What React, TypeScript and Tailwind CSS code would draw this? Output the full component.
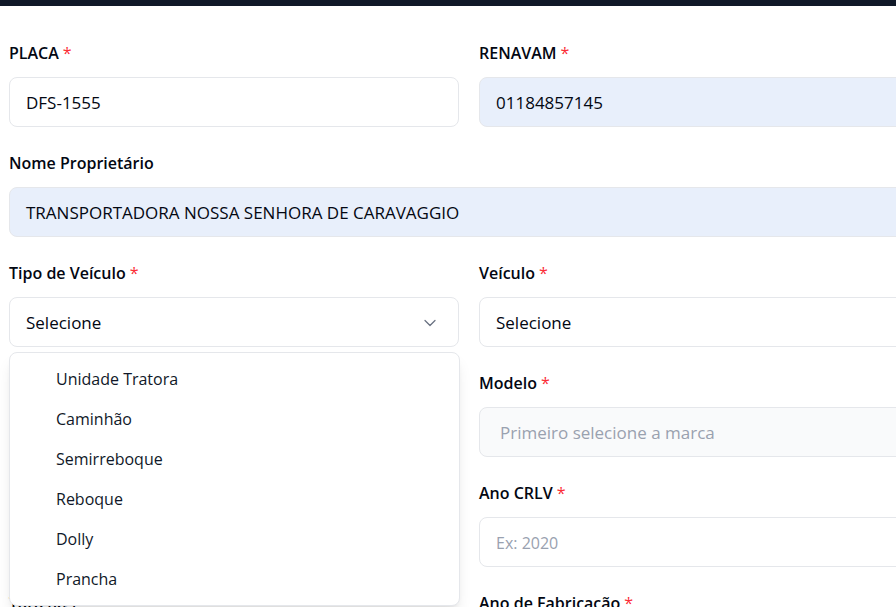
import React from 'react';
import { ChevronDown, ChevronsUpDown } from 'lucide-react';

const Label = ({ text, required = true }: { text: string; required?: boolean }) => (
  <label className="block h-6 mb-3 text-base font-semibold leading-6 text-gray-950">
    {text}
    {required && <span className="ml-1 font-normal text-red-500">*</span>}
  </label>
);

const Field = ({ label, children, required = true }: { label: string; children: React.ReactNode; required?: boolean }) => (
  <div>
    <Label text={label} required={required} />
    {children}
  </div>
);

const boxBase = 'h-[50px] w-full rounded-lg border border-gray-200 flex items-center pt-0.5';

const options = ['Unidade Tratora', 'Caminhão', 'Semirreboque', 'Reboque', 'Dolly', 'Prancha'];

const App = () => {
  return (
    <div className="w-[896px] h-[607px] overflow-hidden bg-white" style={{ fontFamily: '"Open Sans", "Noto Sans", sans-serif' }}>
      <div className="h-1.5 bg-gray-900" />
      <div className="w-[940px] pl-[9px] pt-[35px]">
        <div className="grid grid-cols-[450px_450px] gap-x-5 gap-y-6">
          <Field label="PLACA">
            <div className={`${boxBase} bg-white px-4 text-[17px] text-gray-950`}>DFS-1555</div>
          </Field>
          <Field label="RENAVAM">
            <div className={`${boxBase} bg-[#e8effb] px-4 text-[17px] text-gray-950`}>01184857145</div>
          </Field>

          <div className="col-span-2">
            <Field label="Nome Proprietário" required={false}>
              <div className={`${boxBase} bg-[#e8effb] px-4 text-[17px] text-gray-950`}>TRANSPORTADORA NOSSA SENHORA DE CARAVAGGIO</div>
            </Field>
          </div>

          <div className="relative">
            <Field label="Tipo de Veículo">
              <div className={`${boxBase} bg-white pl-4 pr-[18px] justify-between text-[17px] text-gray-950`}>
                <span>Selecione</span>
                <ChevronDown className="h-5 w-5 text-gray-500" strokeWidth={1.5} />
              </div>
            </Field>
            <div className="absolute left-0 top-[91px] z-10 w-[451px] rounded-lg border border-gray-200 bg-white py-1.5 shadow-lg">
              {options.map((o) => (
                <div key={o} className="h-10 flex items-center pl-[46px] text-base text-gray-900">
                  {o}
                </div>
              ))}
            </div>
          </div>
          <Field label="Veículo">
            <div className={`${boxBase} bg-white px-4 text-[17px] text-gray-950`}>Selecione</div>
          </Field>

          <Field label="Marca">
            <div className={`${boxBase} bg-white px-4 text-gray-400`}>Selecione</div>
          </Field>
          <Field label="Modelo">
            <div className={`${boxBase} bg-gray-50 pl-5 pr-2 justify-between text-[17px] text-gray-400`}>
              <span>Primeiro selecione a marca</span>
              <ChevronsUpDown className="h-4 w-4 text-gray-400" strokeWidth={1.5} />
            </div>
          </Field>

          <Field label="Cor">
            <div className={`${boxBase} bg-white px-4 text-gray-400`}>Ex: Branco</div>
          </Field>
          <Field label="Ano CRLV">
            <div className={`${boxBase} bg-white px-4 text-gray-400`}>Ex: 2020</div>
          </Field>

          <Field label="Tara (kg)">
            <div className={`${boxBase} bg-white px-4 text-gray-400`}>Ex: 8000</div>
          </Field>
          <Field label="Ano de Fabricação">
            <div className={`${boxBase} bg-white px-4 text-gray-400`}>Ex: 2019</div>
          </Field>
        </div>
      </div>
    </div>
  );
};

export default App;
